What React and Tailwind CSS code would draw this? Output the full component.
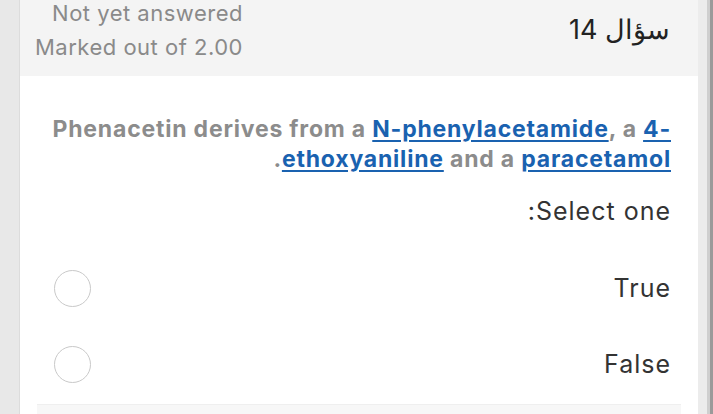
import React from 'react';

const font = { fontFamily: 'Inter, "Noto Sans", "Liberation Sans", sans-serif' };

const Radio = () => (
  <span className="block w-[37px] h-[37px] rounded-full border-[1.5px] border-[#c9c9c9] bg-white shrink-0" />
);

const Option = ({ label }) => (
  <div className="flex items-center justify-between h-[76px]">
    <span className="text-[25px] tracking-[1px] text-[#333] leading-none">{label}</span>
    <Radio />
  </div>
);

const link = 'text-[#1a62b0] underline underline-offset-[3px]';

const App = () => {
  return (
    <div className="w-[713px] h-[414px] overflow-hidden bg-[#e8e8e8] flex" style={font}>
      <div className="w-[20px] shrink-0 border-r border-[#dcdcdc]" />
      <div dir="rtl" className="w-[678px] shrink-0 bg-white flex flex-col">
        <div className="h-[76px] bg-[#f4f4f4] flex items-start justify-between pr-[28px] pl-[15px]">
          <div className="text-[27px] text-[#222] mt-[14px] leading-[32px]">سؤال 14</div>
          <div className="text-[22px] tracking-[0.5px] text-[#8a8a8a] leading-[34px] mt-[-4px] text-right">
            <div>Not yet answered</div>
            <div>Marked out of 2.00</div>
          </div>
        </div>

        <div className="px-[27px] pt-[38px]">
          <div className="text-[23px] tracking-[0.8px] font-bold text-[#8c8c8c] leading-[30px]">
            <div dir="ltr" className="text-right">
              Phenacetin derives from a <a className={link}>N-phenylacetamide</a>, a{' '}
              <a className={link}>4-</a>
            </div>
            <div className="text-right">
              <a className={link}>ethoxyaniline</a> and a <a className={link}>paracetamol</a>.
            </div>
          </div>

          <div className="text-[25px] tracking-[1px] text-[#333] leading-[30px] mt-[22px]">Select one:</div>

          <div className="mt-[24px] pl-[7px]">
            <Option label="True" />
            <Option label="False" />
          </div>
        </div>

        <div className="mt-auto mx-[17px] h-[10px] bg-[#f7f7f7] border-t border-[#efefef]" />
      </div>
      <div className="flex-1 flex">
        <div className="w-[9px] bg-[#ececec]" />
        <div className="w-[3px] bg-[#cfcfcf]" />
        <div className="flex-1 bg-[#9a9a9a]" />
      </div>
    </div>
  );
};

export default App;
